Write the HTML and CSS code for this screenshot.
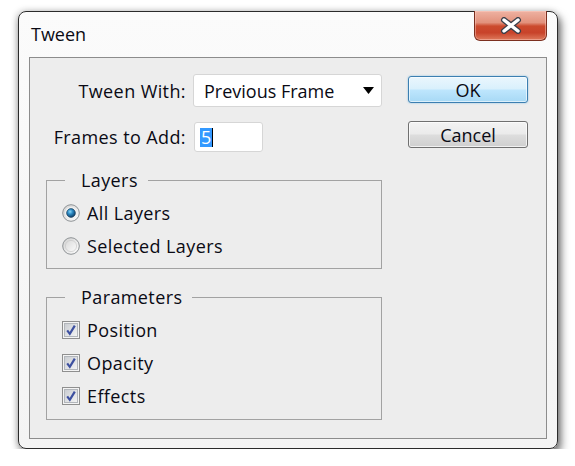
FILE: index.html
```html
<!DOCTYPE html>
<html>
<head>
<meta charset="utf-8">
<link rel="stylesheet" href="styles.css">
</head>
<body>
<div class="window">
  <div class="titlebar">
    <span class="title">Tween</span>
    <div class="close">
      <svg width="22" height="17" viewBox="0 0 22 17">
        <path d="M4 3 L18 14 M18 3 L4 14" stroke="#3a3f4a" stroke-width="6" stroke-linecap="round"/>
        <path d="M4 3 L18 14 M18 3 L4 14" stroke="#ffffff" stroke-width="3.4" stroke-linecap="round"/>
      </svg>
    </div>
  </div>
  <div class="client">
    <div class="main">
      <div class="form">
        <span class="lbl">Tween With:</span>
        <div class="select">
          <span>Previous Frame</span>
          <svg class="arrow" width="11" height="7" viewBox="0 0 11 7"><path d="M0 0 H11 L5.5 7 Z" fill="#000"/></svg>
        </div>
        <span class="lbl">Frames to Add:</span>
        <div class="input"><span class="hl">5</span><span class="caret"></span></div>
      </div>
      <fieldset class="group layers">
        <legend>Layers</legend>
        <div class="opt">
          <svg class="mark" width="18" height="18" viewBox="0 0 18 18">
            <defs>
              <linearGradient id="rOut" x1="0" y1="0" x2="1" y2="1">
                <stop offset="0" stop-color="#cfcfcf"/><stop offset="1" stop-color="#ffffff"/>
              </linearGradient>
              <radialGradient id="rDot" cx="40%" cy="35%" r="65%">
                <stop offset="0" stop-color="#8ad6f7"/><stop offset="0.45" stop-color="#2a88c2"/><stop offset="1" stop-color="#123f66"/>
              </radialGradient>
            </defs>
            <circle cx="9" cy="9" r="8.3" fill="url(#rOut)" stroke="#8f9396" stroke-width="1"/>
            <circle cx="9" cy="9" r="6" fill="#f2f2f2"/>
            <circle cx="9" cy="9" r="4.4" fill="url(#rDot)" stroke="#0f3554" stroke-width="0.6"/>
          </svg>
          <span>All Layers</span>
        </div>
        <div class="opt">
          <svg class="mark" width="18" height="18" viewBox="0 0 18 18">
            <defs>
              <linearGradient id="rOut2" x1="0" y1="0" x2="1" y2="1">
                <stop offset="0" stop-color="#cfcfcf"/><stop offset="1" stop-color="#ffffff"/>
              </linearGradient>
              <linearGradient id="rIn2" x1="0" y1="0" x2="1" y2="1">
                <stop offset="0" stop-color="#d9d9d9"/><stop offset="1" stop-color="#fbfbfb"/>
              </linearGradient>
            </defs>
            <circle cx="9" cy="9" r="8.3" fill="url(#rOut2)" stroke="#8f9396" stroke-width="1"/>
            <circle cx="9" cy="9" r="5.6" fill="url(#rIn2)" stroke="#c4c4c4" stroke-width="0.6"/>
          </svg>
          <span>Selected Layers</span>
        </div>
      </fieldset>
      <fieldset class="group params">
        <legend>Parameters</legend>
        <div class="opt">
          <svg class="mark" width="18" height="18" viewBox="0 0 18 18">
            <defs>
              <linearGradient id="cIn" x1="0" y1="0" x2="1" y2="1">
                <stop offset="0" stop-color="#c9ccd1"/><stop offset="1" stop-color="#f4f4f4"/>
              </linearGradient>
            </defs>
            <rect x="0.5" y="0.5" width="17" height="17" fill="#f4f4f4" stroke="#8f8f8f"/>
            <rect x="2.5" y="2.5" width="13" height="13" fill="url(#cIn)" stroke="#b2b6bb"/>
            <path d="M5.2 9.4 L7.8 12.8 L12.8 4.6" fill="none" stroke="#3d50a0" stroke-width="2.2"/>
          </svg>
          <span>Position</span>
        </div>
        <div class="opt">
          <svg class="mark" width="18" height="18" viewBox="0 0 18 18">
            <rect x="0.5" y="0.5" width="17" height="17" fill="#f4f4f4" stroke="#8f8f8f"/>
            <rect x="2.5" y="2.5" width="13" height="13" fill="url(#cIn)" stroke="#b2b6bb"/>
            <path d="M5.2 9.4 L7.8 12.8 L12.8 4.6" fill="none" stroke="#3d50a0" stroke-width="2.2"/>
          </svg>
          <span>Opacity</span>
        </div>
        <div class="opt">
          <svg class="mark" width="18" height="18" viewBox="0 0 18 18">
            <rect x="0.5" y="0.5" width="17" height="17" fill="#f4f4f4" stroke="#8f8f8f"/>
            <rect x="2.5" y="2.5" width="13" height="13" fill="url(#cIn)" stroke="#b2b6bb"/>
            <path d="M5.2 9.4 L7.8 12.8 L12.8 4.6" fill="none" stroke="#3d50a0" stroke-width="2.2"/>
          </svg>
          <span>Effects</span>
        </div>
      </fieldset>
    </div>
    <div class="buttons">
      <button class="btn ok">OK</button>
      <button class="btn">Cancel</button>
    </div>
  </div>
</div>
</body>
</html>
```

FILE: styles.css
```css
html, body {
  margin: 0;
  background: #ffffff;
}
body {
  font-family: "Open Sans", "Noto Sans", sans-serif;
  font-size: 18px;
  letter-spacing: 0.4px;
  color: #0a0a14;
}
.window {
  margin: 11px 0 0 18px;
  width: 540px;
  height: 438px;
  box-sizing: border-box;
  border: 1px solid #2b2b2b;
  border-radius: 8px;
  background: linear-gradient(#fbfbfb, #f4f4f4);
  box-shadow: 3px 5px 8px rgba(0, 0, 0, 0.55), -1px 0 7px rgba(0, 0, 0, 0.22);
  display: flex;
  flex-direction: column;
}
.titlebar {
  height: 45px;
  flex: none;
  display: flex;
  justify-content: space-between;
  align-items: flex-start;
  padding-left: 12px;
}
.title {
  align-self: center;
  line-height: 22px;
  letter-spacing: 0;
  margin-top: -1px;
}
.close {
  width: 73px;
  height: 30px;
  box-sizing: border-box;
  margin: -1px 10px 0 0;
  border: 1px solid #7c2f1f;
  border-top: none;
  border-radius: 0 0 6px 6px;
  background: linear-gradient(#eeb2a2 0%, #e2917c 40%, #cc4a2e 52%, #c8432a 75%, #de7a5c 100%);
  box-shadow: inset 0 0 0 1px rgba(255, 210, 200, 0.45);
  display: flex;
  align-items: center;
  justify-content: center;
}
.client {
  flex: 1;
  margin: 0 10px 9px 10px;
  border: 1px solid #8c8c8c;
  background: #ededed;
  display: flex;
  gap: 26px;
  padding: 16px 0 0 16px;
}
.main {
  width: 336px;
  display: flex;
  flex-direction: column;
}
.form {
  display: grid;
  grid-template-columns: 140px 189px;
  grid-template-rows: 33px 30px;
  column-gap: 7px;
  row-gap: 15px;
  align-items: center;
}
.lbl {
  text-align: right;
  white-space: nowrap;
}
.select {
  height: 33px;
  box-sizing: border-box;
  background: #ffffff;
  border: 1px solid #d6d6d6;
  border-radius: 3px;
  display: flex;
  align-items: center;
  justify-content: space-between;
  padding: 0 7px 0 10px;
  letter-spacing: 0;
}
.input {
  width: 69px;
  height: 30px;
  box-sizing: border-box;
  margin-left: 1px;
  background: #ffffff;
  border: 1px solid #d6d6d6;
  border-radius: 3px;
  display: flex;
  align-items: center;
  padding-left: 5px;
}
.hl {
  background: #3399ff;
  color: #ffffff;
  line-height: 19px;
  padding: 0 1px 0 1px;
  letter-spacing: 0;
}
.caret {
  width: 1px;
  height: 19px;
  background: #000;
}
.group {
  margin: 17px 0 0 0;
  padding: 5px 0 6px 15px;
  border: 1px solid #a2a2a2;
  box-sizing: border-box;
  width: 336px;
  min-width: 0;
}
.group legend {
  margin-left: 3px;
  padding: 0 10px 0 16px;
  line-height: 22px;
}
.params {
  padding-bottom: 7px;
}
.opt {
  height: 33px;
  display: flex;
  align-items: center;
  gap: 7px;
}
.mark {
  flex: none;
}
.buttons {
  padding-top: 2px;
  display: flex;
  flex-direction: column;
  gap: 18px;
}
.btn {
  width: 120px;
  height: 27px;
  box-sizing: border-box;
  font-family: inherit;
  font-size: 18px;
  letter-spacing: 0;
  color: #0a0a14;
  padding: 0;
  border: 1px solid #707070;
  border-radius: 3px;
  background: linear-gradient(#f3f3f3 0%, #ebebeb 48%, #dddddd 52%, #cfcfcf 100%);
  box-shadow: inset 0 0 0 1px rgba(255, 255, 255, 0.7);
  line-height: 24px;
}
.btn.ok {
  border-color: #3c7fb1;
  background: linear-gradient(#eaf6fd 0%, #d9f0fc 48%, #bee6fd 52%, #a7d9f5 100%);
  box-shadow: inset 0 0 0 1px rgba(255, 255, 255, 0.6), 0 0 2px rgba(60, 160, 220, 0.6);
}
```
